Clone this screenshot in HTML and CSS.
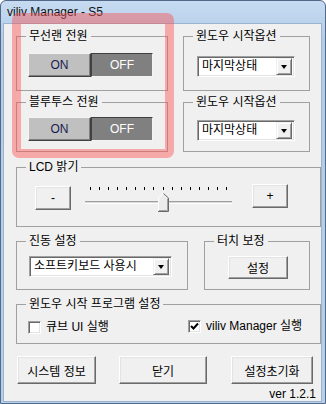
FILE: index.html
```html
<!DOCTYPE html>
<html>
<head>
  <meta charset="UTF-8">
  <title>viliv Manager - S5</title>
  <link rel="stylesheet" href="styles.css">
</head>
<body>
<div class="window">
  <div class="titlebar">viliv Manager - S5</div>
  <div class="client">
    <div class="row-top">
      <div class="col-left">
        <fieldset class="group g-wlan">
          <legend>무선랜 전원</legend>
          <div class="toggle">
            <button class="tbtn on">ON</button><button class="tbtn off">OFF</button>
          </div>
        </fieldset>
        <fieldset class="group g-bt">
          <legend>블루투스 전원</legend>
          <div class="toggle">
            <button class="tbtn on">ON</button><button class="tbtn off">OFF</button>
          </div>
        </fieldset>
      </div>
      <div class="col-right">
        <fieldset class="group g-start1">
          <legend>윈도우 시작옵션</legend>
          <div class="combo combo-start">
            <span class="combo-text">마지막상태</span>
            <span class="combo-arrow"><i></i></span>
          </div>
        </fieldset>
        <fieldset class="group g-start2">
          <legend>윈도우 시작옵션</legend>
          <div class="combo combo-start">
            <span class="combo-text">마지막상태</span>
            <span class="combo-arrow"><i></i></span>
          </div>
        </fieldset>
      </div>
    </div>

    <fieldset class="group g-lcd">
      <legend>LCD 밝기</legend>
      <div class="lcd-row">
        <button class="btn btn-minus">-</button>
        <div class="slider">
          <div class="ticks">
            <i></i><i></i><i></i><i></i><i></i><i></i><i></i><i></i>
            <i></i><i></i><i></i><i></i><i></i><i></i><i></i><i></i>
          </div>
          <div class="track"></div>
          <svg class="thumb" width="11" height="19" viewBox="0 0 11 19">
            <polygon points="1,5 5.5,0.5 10,5 10,18 1,18" fill="#ececec"/>
            <polyline points="0.5,18 0.5,5 5.5,0" fill="none" stroke="#fff"/>
            <polyline points="5.5,0.5 10.5,5 10.5,18.5 0,18.5" fill="none" stroke="#696969"/>
            <polyline points="9.5,5.5 9.5,17.5 1,17.5" fill="none" stroke="#a0a0a0"/>
          </svg>
        </div>
        <button class="btn btn-plus">+</button>
      </div>
    </fieldset>

    <div class="row-mid">
      <fieldset class="group g-vib">
        <legend>진동 설정</legend>
        <div class="combo combo-vib">
          <span class="combo-text">소프트키보드 사용시</span>
          <span class="combo-arrow"><i></i></span>
        </div>
      </fieldset>
      <fieldset class="group g-touch">
        <legend>터치 보정</legend>
        <button class="btn btn-set">설정</button>
      </fieldset>
    </div>

    <fieldset class="group g-prog">
      <legend>윈도우 시작 프로그램 설정</legend>
      <div class="prog-row">
        <label class="chk-item"><span class="check"></span>큐브 UI 실행</label>
        <label class="chk-item item2"><span class="check checked">
          <svg width="9" height="9" viewBox="0 0 9 9"><polyline points="1,4 3.5,6.5 8,1.5" fill="none" stroke="#000" stroke-width="2"/></svg>
        </span>viliv Manager 실행</label>
      </div>
    </fieldset>

    <div class="bottom-row">
      <button class="btn btn-info">시스템 정보</button>
      <button class="btn btn-close">닫기</button>
      <button class="btn btn-reset">설정초기화</button>
    </div>
    <div class="ver">ver 1.2.1</div>
  </div>
  <div class="highlight"></div>
</div>
</body>
</html>
```

FILE: styles.css
```css
body {
  margin: 0; padding: 0;
  font-family: "Liberation Sans", "Noto Sans CJK KR", sans-serif;
  font-size: 12px;
  color: #000;
}
.window {
  position: relative;
  width: 326px; height: 404px;
  box-sizing: border-box;
  border: 1px solid #52698a;
  border-radius: 6px 6px 0 0;
  background: linear-gradient(#c6dbf1, #b3cce8 40px, #b6cfea);
  display: flex; flex-direction: column;
}
.titlebar {
  height: 23px; line-height: 23px;
  padding-left: 6px;
  color: #111;
  font-size: 12px;
}
.client {
  flex: 1;
  margin: 0 4px 2px 3px;
  padding: 5px 0 0 12px;
  background: #f0f0f0;
  box-shadow: 0 0 0 1px #9bb3cf;
}

/*group boxes*/
.group {
  margin: 0; padding: 0;
  min-width: 0;
  box-sizing: border-box;
  border: 1px solid #a0a0a0;
}
.group legend {
  margin-left: 9px;
  padding: 0 3px;
  line-height: 14px;
}

.row-top { display: flex; gap: 15px; }
.col-left { width: 152px; }
.col-right { width: 127px; }
.g-wlan, .g-start1 { height: 62px; }
.g-bt, .g-start2 { height: 57px; margin-top: 4px; }

/*on/off toggles*/
.toggle { display: flex; margin: 10px 0 0 11px; }
.g-bt .toggle { margin-top: 8px; }
.tbtn {
  height: 24px; padding: 0;
  font: inherit;
  box-sizing: border-box;
  border: 1px solid;
}
.tbtn.on {
  width: 63px;
  background: #c0c0c0; color: #1a1a50;
  border-color: #f4f4f4 #404040 #404040 #f4f4f4;
  box-shadow: inset -1px -1px 0 #808080;
}
.tbtn.off {
  width: 62px;
  background: #808080; color: #fff;
  border-color: #404040 #f4f4f4 #f4f4f4 #404040;
}

/*combo boxes*/
.combo {
  display: flex; align-items: center;
  box-sizing: border-box;
  height: 21px;
  padding: 2px;
  background: #fff;
  border: 1px solid;
  border-color: #a0a0a0 #fff #fff #a0a0a0;
  box-shadow: inset 1px 1px 0 #696969, inset -1px -1px 0 #e3e3e3;
}
.combo-text { flex: 1; padding-left: 2px; line-height: 17px; white-space: nowrap; }
.combo-arrow {
  width: 16px; height: 17px;
  box-sizing: border-box;
  background: #f0f0f0;
  border: 1px solid;
  border-color: #f0f0f0 #696969 #696969 #f0f0f0;
  box-shadow: inset 1px 1px 0 #fff, inset -1px -1px 0 #a0a0a0;
  display: flex; align-items: center; justify-content: center;
}
.combo-arrow i {
  width: 0; height: 0;
  border-left: 3.5px solid transparent;
  border-right: 3.5px solid transparent;
  border-top: 4px solid #000;
}
.combo-start { width: 98px; margin: 13px 0 0 13px; }
.g-start2 .combo-start { margin-top: 11px; }
.combo-vib { width: 143px; margin: 8px 0 0 12px; }

/*push buttons*/
.btn {
  box-sizing: border-box;
  padding: 0;
  font: inherit; color: #000;
  background: #f0f0f0;
  border: 1px solid;
  border-color: #fff #696969 #696969 #fff;
  box-shadow: inset -1px -1px 0 #a0a0a0, inset 1px 1px 0 #e3e3e3;
}

/*lcd*/
.g-lcd { height: 67px; margin-top: 8px; }
.lcd-row { display: flex; align-items: flex-start; margin-top: 12px; }
.btn-minus { width: 36px; height: 24px; margin-left: 18px; }
.btn-plus { width: 36px; height: 24px; margin-left: 20px; margin-top: -2px; }
.slider { position: relative; width: 147px; height: 27px; margin-left: 14px; }
.ticks { display: flex; justify-content: space-between; padding: 0 5px; margin-top: 1px; height: 3px; }
.ticks i { width: 1px; height: 3px; background: #000; }
.track {
  margin-top: 11px;
  height: 3px;
  box-sizing: border-box;
  border-top: 1px solid #a0a0a0;
  border-bottom: 1px solid #fff;
  background: #d8d8d8;
}
.thumb { position: absolute; left: 73px; top: 7px; }

/*vibration + touch*/
.row-mid { display: flex; gap: 16px; margin-top: 7px; }
.g-vib { width: 172px; height: 56px; }
.g-touch { width: 106px; height: 56px; }
.btn-set { width: 60px; height: 23px; margin: 8px 0 0 23px; }

/*startup programs*/
.g-prog { height: 47px; margin-top: 7px; }
.prog-row { display: grid; grid-template-columns: 160px auto; margin: 9px 0 0 11px; }
.chk-item { display: flex; align-items: center; gap: 5px; line-height: 14px; }
.item2 { margin-top: -2px; }
.check {
  width: 13px; height: 13px;
  box-sizing: border-box;
  background: #fff;
  border: 1px solid;
  border-color: #a0a0a0 #fff #fff #a0a0a0;
  box-shadow: inset 1px 1px 0 #696969, inset -1px -1px 0 #e3e3e3;
  display: flex; align-items: center; justify-content: center;
}

/*bottom*/
.bottom-row { display: flex; margin: 12px 0 0 1px; }
.bottom-row .btn { height: 28px; }
.btn-info { width: 79px; }
.btn-close { width: 88px; margin-left: 23px; }
.btn-reset { width: 82px; margin-left: 24px; }
.ver { text-align: right; margin: 3px 5px 0 0; line-height: 14px; }

/*annotation frame*/
.highlight {
  position: absolute;
  left: 11px; top: 12px;
  width: 162px; height: 145px;
  box-sizing: border-box;
  border: solid rgba(251, 82, 82, 0.45);
  border-width: 11px 9px 9px 9px;
  border-radius: 7px;
  pointer-events: none;
}
```
